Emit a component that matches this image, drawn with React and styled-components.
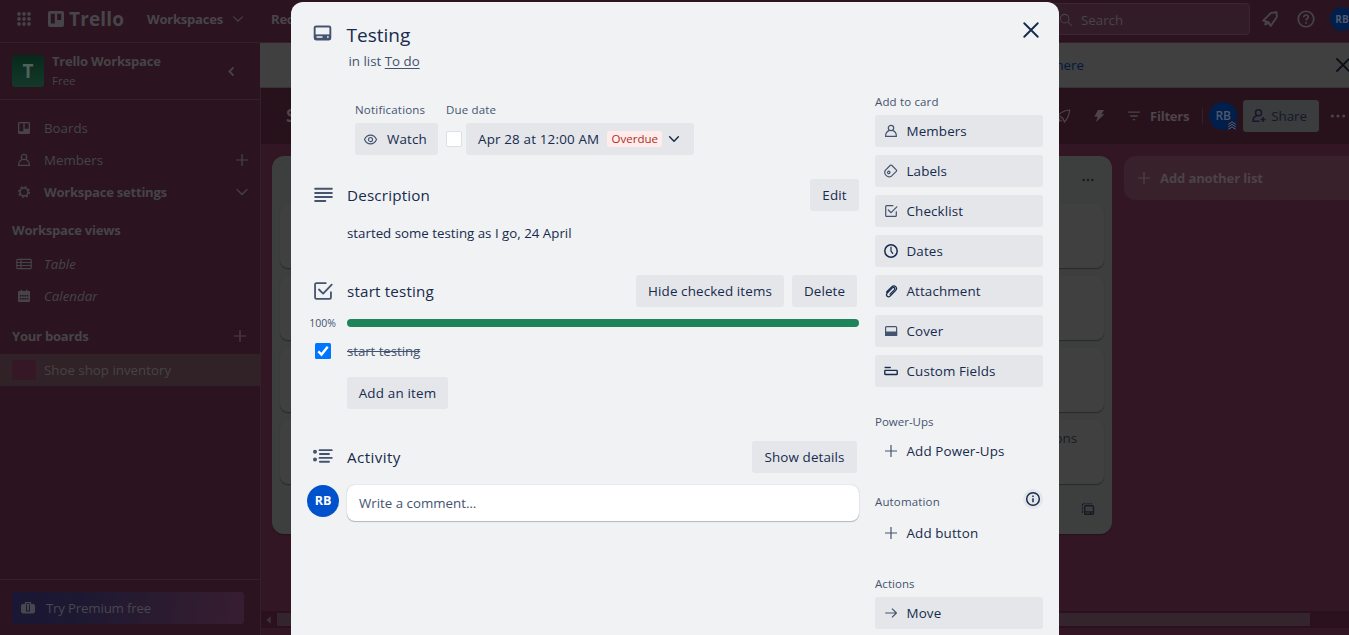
import React from "react";
import styled, { createGlobalStyle } from "styled-components";

const Global = createGlobalStyle`
  * { box-sizing: border-box; }
  body {
    margin: 0;
    overflow: hidden;
    background: #331624;
    font-family: "Open Sans", "Noto Sans", sans-serif;
    font-size: 13.3px;
    line-height: 20px;
    color: #172b4d;
  }
`;

const Text = styled.span`
  font-size: ${(p) => p.$size || 13.3}px;
  font-weight: ${(p) => p.$weight || 400};
  font-style: ${(p) => (p.$italic ? "italic" : "normal")};
  letter-spacing: ${(p) => p.$track || 0}px;
  color: ${(p) => p.$color || "inherit"};
  white-space: nowrap;
`;

const ButtonText = styled(Text).attrs({ $weight: 500, $size: 13.4 })`
  letter-spacing: ${(p) => p.$track ?? 0.12}px;
`;

const Caption = styled(Text).attrs({ $weight: 500, $size: 11.5 })`
  letter-spacing: ${(p) => p.$track ?? 0.15}px;
`;

const SectionTitle = styled(Text).attrs({ $weight: 500, $size: 15.2 })`
  letter-spacing: ${(p) => p.$track ?? 0.18}px;
`;

const Strong = styled(Text).attrs({ $weight: 700 })`
  font-size: 13.1px;
  letter-spacing: ${(p) => p.$track ?? -0.26}px;
`;

const Svg = styled.svg`
  display: block;
  flex: none;
  fill: none;
  stroke: currentColor;
  stroke-width: ${(p) => p.$stroke || 1.2};
`;

const Icon = ({ size = 16, stroke, children, ...rest }) => (
  <Svg width={size} height={size} viewBox="0 0 16 16" $stroke={stroke} {...rest}>
    {children}
  </Svg>
);

const MemberIcon = (p) => (
  <Icon {...p}>
    <circle cx="8" cy="5" r="2.700" />
    <path d="M6.200 7.600C3.600 8.300 2.600 10.400 2.600 13.400h10.800c0-3-1-5.100-3.600-5.800" strokeLinejoin="round" />
  </Icon>
);
const LabelIcon = (p) => (
  <Icon {...p}>
    <path d="M2.300 7.400 7.300 2.300q.7-.6 1.400 0l4.600 4.600q.7.700 0 1.400l-4.600 4.600c-3.800 2.900-8.400-1.700-6.400-5.500z" />
    <circle cx="5.800" cy="9.400" r="1.200" />
  </Icon>
);
const CheckIcon = (p) => (
  <Icon {...p}>
    <path d="M10.300 2.700H3.600q-.9 0-.9.900v8.800q0 .9.900.9h8.800q.9 0 .9-.9V8.300" />
    <path d="m5.300 7 2.800 2.700 5.700-5.900" strokeLinecap="round" strokeLinejoin="round" />
  </Icon>
);
const ClockIcon = (p) => (
  <Icon {...p}>
    <circle cx="8" cy="8" r="6.200" strokeWidth="1.500" />
    <path d="M8 4v4l1.700 2.400" strokeLinecap="round" />
  </Icon>
);
const ClipIcon = (p) => (
  <Icon {...p}>
    <path d="m7 11.200 4.300-4.400c1.300-1.500-.5-3.200-1.900-1.900l-5.200 5.300c-2 2.500.8 4.800 3 2.800L12.500 7.700c2.800-3.100-.9-6.600-3.900-3.800L3.600 9" strokeLinecap="round" />
  </Icon>
);
const CoverIcon = (p) => (
  <Icon {...p}>
    <rect x="2.600" y="3.600" width="11" height="8.800" rx="1" />
    <path d="M2.600 9h11v3.400h-11z" fill="currentColor" />
  </Icon>
);
const FieldsIcon = (p) => (
  <Icon {...p}>
    <path d="M1.600 4.500h6.200" strokeWidth="1.400" />
    <rect x="1.800" y="7.400" width="12.400" height="4.100" rx=".6" strokeWidth="1.400" />
  </Icon>
);
const PlusIcon = (p) => (
  <Icon {...p}>
    <path d="M8 2v12M2 8h12" />
  </Icon>
);
const ArrowIcon = (p) => (
  <Icon {...p}>
    <path d="M2.200 8h11M9 3.600 13.400 8 9 12.400" strokeLinejoin="round" />
  </Icon>
);
const ChevronIcon = (p) => (
  <Icon {...p}>
    <path d="m3 5.500 5 5 5-5" strokeLinecap="round" strokeLinejoin="round" />
  </Icon>
);
const EyeIcon = (p) => (
  <Icon {...p}>
    <path d="M1.600 8c2.600-6.200 10.200-6.200 12.800 0-2.600 6.200-10.200 6.200-12.800 0z" />
    <circle cx="8" cy="8" r="2.200" />
  </Icon>
);
const CloseIcon = (p) => (
  <Icon {...p}>
    <path d="m2 2 12 12M14 2 2 14" strokeLinecap="round" />
  </Icon>
);
const InfoIcon = (p) => (
  <Icon {...p}>
    <circle cx="8" cy="8" r="6.300" />
    <path d="M8 7.300v4M8 4.400v1.600" />
  </Icon>
);
const CardIcon = (p) => (
  <Icon {...p}>
    <rect x="1.400" y="2.900" width="13.200" height="11" rx="1.200" />
    <path d="M1.400 9.600h13.200v4.200H1.400z" fill="currentColor" stroke="none" />
    <path d="M3 11.800h5M11.800 11.800h1.400" stroke="#f1f2f4" strokeWidth="1.200" />
  </Icon>
);
const BoardIcon = (p) => (
  <Icon {...p}>
    <path
      d="M2 0h12q2 0 2 2v12q0 2-2 2H2q-2 0-2-2V2q0-2 2-2zM2.800 2.800v9.700h4V2.800zM9.200 2.800v6.200h4V2.800z"
      fill="currentColor"
      fillRule="evenodd"
      stroke="none"
    />
  </Icon>
);
const BoardOutlineIcon = (p) => (
  <Icon {...p}>
    <path
      d="M3.200 2h9.600q1.200 0 1.200 1.200v9.600q0 1.200-1.200 1.200H3.200Q2 14 2 12.800V3.200Q2 2 3.200 2zM3.300 3.300v7.900h4V3.300zM8.700 3.300v5.400h4V3.300z"
      fill="currentColor"
      fillRule="evenodd"
      stroke="none"
    />
  </Icon>
);
const GearIcon = (p) => (
  <Icon {...p}>
    <circle cx="8" cy="8" r="4" strokeWidth="1.600" />
    <circle cx="8" cy="8" r="5.300" strokeWidth="1.500" strokeDasharray="1.900 2.262" />
  </Icon>
);
const TableIcon = (p) => (
  <Icon {...p}>
    <rect x=".8" y="3.300" width="14.400" height="9.400" rx="1" />
    <path d="M.8 6.500h14.400M.8 9.500h14.400M5 3.300v9.400" />
  </Icon>
);
const CalendarIcon = (p) => (
  <Icon {...p}>
    <path
      d="M3 3h1.500V1.800H6V3h4V1.800h1.500V3H13q1 0 1 1v9q0 1-1 1H3q-1 0-1-1V4q0-1 1-1z"
      fill="currentColor"
      stroke="none"
    />
    <path d="M3.800 7.800h8.600M3.800 10.800h8.600" stroke="#2b141f" strokeWidth="1.600" strokeDasharray="1.600 .7" />
  </Icon>
);
const CaseIcon = (p) => (
  <Icon {...p}>
    <rect x="1" y="4" width="14" height="9.400" rx="1.800" fill="currentColor" stroke="none" />
    <path d="M5.500 4V2.600h5V4" strokeWidth="1.300" />
    <path d="M6.500 4.500v6.600h3V4.500" stroke="#1c1833" strokeWidth="1" />
  </Icon>
);
const BellIcon = (p) => (
  <Icon {...p}>
    <path d="M1.900 9.400 9 2.500l4.800-.5.300 4.200-5.500 8-1.800-3.400zM4.500 10.300l-.8 2.600 3-.9" strokeLinejoin="round" />
  </Icon>
);
const HelpIcon = (p) => (
  <Icon {...p}>
    <circle cx="8" cy="8" r="6.900" />
    <path d="M6 6.400c0-2.700 4-2.500 4-.2 0 1.500-2 1.600-2 3.200M8 10.700v1.500" />
  </Icon>
);
const SearchIcon = (p) => (
  <Icon {...p}>
    <circle cx="6.500" cy="6.500" r="4.900" />
    <path d="m10 10 4.500 4.500" />
  </Icon>
);
const RocketIcon = (p) => (
  <Icon {...p}>
    <path d="M2 7.600q4-5 11.700-5.600-.5 7-5.300 12L7 10.500 5.300 9zM4 10l-1.600 3.600L6 12" strokeLinejoin="round" />
  </Icon>
);
const BoltIcon = (p) => (
  <Icon {...p}>
    <path d="M7 2h6L10.500 6.200h2.900L4.900 14.300l1.800-5.500H3.300z" fill="currentColor" stroke="none" />
  </Icon>
);
const FilterIcon = (p) => (
  <Icon {...p}>
    <path d="M2.200 4.200h11.600M4.200 8h7.600M6.800 11.700h2.400" strokeWidth="1.300" />
  </Icon>
);
const DotsIcon = (p) => (
  <Icon {...p}>
    <circle cx="2.300" cy="8" r="1.600" fill="currentColor" stroke="none" />
    <circle cx="8" cy="8" r="1.600" fill="currentColor" stroke="none" />
    <circle cx="13.700" cy="8" r="1.600" fill="currentColor" stroke="none" />
  </Icon>
);
const AppsIcon = (p) => (
  <Icon {...p}>
    {[2.300, 8, 13.700].map((x) =>
      [2.300, 8, 13.700].map((y) => (
        <rect key={`${x}-${y}`} x={x - 1.900} y={y - 1.900} width="3.800" height="3.800" rx="1.300" fill="currentColor" stroke="none" />
      ))
    )}
  </Icon>
);
const LinesIcon = (p) => (
  <Icon {...p}>
    <path d="M1 2.400h14M1 5.800h14M1 9.200h14M1 12.600h8.500" strokeLinecap="round" />
  </Icon>
);
const ActivityIcon = (p) => (
  <Icon {...p}>
    <path d="M5.200 2.500h9.800M5.500 5.600h7.300M5.200 8.700h9.800M5.500 11.800h7.300" strokeLinecap="round" />
    <circle cx="1.600" cy="3.700" r="1.600" fill="currentColor" stroke="none" />
    <circle cx="1.600" cy="9.900" r="1.600" fill="currentColor" stroke="none" />
  </Icon>
);
const TemplateIcon = (p) => (
  <Icon {...p}>
    <rect x="4.700" y="4.700" width="8.800" height="8.600" rx="1" strokeWidth="1.400" />
    <path d="M4.700 10.300h8.800v1.300H4.700zM9.500 11h2v2h-2z" fill="currentColor" stroke="none" />
    <path d="M2.500 12V2.700H12" strokeDasharray="2.400 1" strokeWidth="1.100" />
  </Icon>
);

/* ---------- Page behind the dialog ---------- */

const Page = styled.div`
  position: relative;
  display: flex;
  flex-direction: column;
  width: 1349px;
  height: 635px;
  overflow: hidden;
`;

const TopBar = styled.header`
  display: flex;
  align-items: center;
  height: 43px;
  padding: 0 0 4px 17px;
  background: #2b141f;
  border-bottom: 1px solid #35202a;
  color: #484549;
`;

const Logo = styled.div`
  display: flex;
  align-items: center;
  gap: 5px;
  width: 99px;
  margin-left: 17px;
`;

const NavItem = styled.div`
  display: flex;
  align-items: center;
  gap: 8px;
  width: 124px;
`;

const SearchBox = styled.div`
  display: flex;
  align-items: center;
  gap: 8px;
  width: 210px;
  height: 32px;
  margin-left: auto;
  padding: 1px 0 0 18px;
  border: 1px solid #3b2731;
  border-radius: 4px;
  background: #321c27;
`;

const TopIcons = styled.div`
  display: flex;
  align-items: center;
  gap: 18px;
  width: 99px;
  padding-left: 11px;
  overflow: hidden;
  & > div { margin-left: -3px; }
`;

const Avatar = styled.div`
  position: relative;
  display: flex;
  flex: none;
  align-items: center;
  justify-content: center;
  width: ${(p) => p.$size}px;
  height: ${(p) => p.$size}px;
  border-radius: 50%;
  background: ${(p) => (p.$dim ? "#001f4c" : "#0052cc")};
  color: ${(p) => (p.$dim ? "#4f5a70" : "#fff")};
`;

const AdminBadge = styled.span`
  position: absolute;
  right: 0;
  bottom: 1px;
  width: 10px;
  height: 9px;
  background: #111a38;
  color: #5a6488;
`;

const Body = styled.div`
  display: flex;
  flex: 1;
  min-height: 0;
`;

const Sidebar = styled.nav`
  display: flex;
  flex-direction: column;
  width: 261px;
  background: #2b141f;
  border-right: 1px solid #33202a;
  color: #454447;
`;

const WorkspaceHead = styled.div`
  display: flex;
  align-items: center;
  height: 57px;
  padding: 0 22px 0 12px;
  border-bottom: 1px solid #35202a;
`;

const WorkspaceTile = styled.div`
  display: flex;
  align-items: center;
  justify-content: center;
  width: 32px;
  height: 32px;
  margin-right: 8px;
  border-radius: 3px;
  background: linear-gradient(#06291c, #14382a);
  color: #50605a;
`;

const WorkspaceName = styled.div`
  display: flex;
  flex: 1;
  flex-direction: column;
`;

const SideRow = styled.div`
  display: flex;
  align-items: center;
  height: 32px;
  padding: 0 ${(p) => p.$right || 10}px 0 ${(p) => p.$left || 16}px;
  gap: ${(p) => p.$gap ?? 12}px;
  margin-top: ${(p) => p.$top || 0}px;
  background: ${(p) => (p.$active ? "#312228" : "transparent")};
  & > svg:last-child:not(:first-child) { margin-left: auto; }
`;

const BoardSwatch = styled.span`
  width: 24px;
  height: 20px;
  border-radius: 3px;
  background: #351725;
`;

const SideFoot = styled.div`
  height: 56px;
  margin-top: auto;
  padding: 12px;
  border-top: 1px solid #35202a;
`;

const PremiumButton = styled.div`
  display: flex;
  align-items: center;
  gap: 10px;
  width: 232px;
  height: 32px;
  padding-left: 8px;
  border-radius: 3px;
  background: linear-gradient(100deg, #1a1734 0%, #1d1832 28%, #2a1b30 62%, #381d31 100%);
  color: #48474f;
`;

const Board = styled.main`
  display: flex;
  flex: 1;
  flex-direction: column;
  min-width: 0;
  background: #331624;
`;

const Banner = styled.div`
  display: flex;
  align-items: center;
  justify-content: flex-end;
  flex: none;
  gap: 251px;
  height: 45px;
  margin-left: -1px;
  background: #404040;
  border-bottom: 1px solid #373237;
  color: #0b1018;
  overflow: hidden;
  & > svg { margin-right: -2px; }
`;

const BoardBar = styled.div`
  display: flex;
  align-items: center;
  flex: none;
  height: 56px;
  padding-left: 25px;
  background: #27111b;
  color: #4d444a;
`;

const BoardTools = styled.div`
  display: flex;
  align-items: center;
  margin-left: auto;
  width: 293px;
`;

const ToolGap = styled.i`
  width: ${(p) => p.$w}px;
`;

const ToolDivider = styled.i`
  width: 1px;
  height: 16px;
  margin: 0 6px 0 13px;
  background: #352029;
`;

const ShareButton = styled.div`
  display: flex;
  align-items: center;
  gap: 4px;
  width: 76px;
  height: 32px;
  margin: 0 11px 0 6px;
  padding-left: 8px;
  border-radius: 3px;
  background: #3b3c3e;
  color: #12192a;
`;

const Lists = styled.div`
  display: flex;
  flex: 1;
  gap: 12px;
  padding: 12px 0 0 11px;
  align-items: flex-start;
  overflow: hidden;
`;

const List = styled.section`
  display: flex;
  flex: none;
  flex-direction: column;
  gap: 8px;
  width: 272px;
  height: 378px;
  padding: 0 8px;
  border-radius: 12px;
  background: #3c3f3d;
  box-shadow: 0 1px 1px #20141a;
  color: #171b24;
`;

const ListHead = styled.div`
  display: flex;
  align-items: center;
  justify-content: flex-end;
  height: 40px;
  padding: 8px 10px 0 0;
`;

const BoardCard = styled.article`
  height: 64px;
  padding: 8px 27px;
  border-radius: 8px;
  background: #404040;
  box-shadow: 0 1px 1px #272a29;
  text-align: right;
`;

const ListFoot = styled.div`
  display: flex;
  align-items: center;
  justify-content: space-between;
  padding: 9px 8px 0 10px;
`;

const AddList = styled.div`
  display: flex;
  flex: none;
  align-items: center;
  gap: 8px;
  width: 272px;
  height: 44px;
  padding-left: 12px;
  border-radius: 12px;
  background: #39212c;
  color: #4c4346;
`;

const Scroller = styled.div`
  display: flex;
  align-items: center;
  flex: none;
  height: 17px;
  margin-bottom: 7px;
  background: #2b111e;
  color: #40303a;
`;

const Thumb = styled.i`
  width: 1033px;
  height: 13px;
  margin-left: 4px;
  background: #33252b;
`;

/* ---------- Card dialog ---------- */

const Dialog = styled.section`
  position: absolute;
  left: 291px;
  top: 2px;
  width: 768px;
  height: 660px;
  border-radius: 12px;
  background: #f1f2f4;
`;

const DialogHead = styled.header`
  display: flex;
  height: 69px;
  padding: 21px 19px 0 22px;
  color: #44546f;
  & > svg:last-child { margin: -2px 0 0 auto; color: #172b4d; }
`;

const Titles = styled.div`
  display: flex;
  flex-direction: column;
  margin-left: 14.500px;
  line-height: 24px;
`;

const InList = styled.div`
  margin: 4px 0 0 2px;
  line-height: 20px;
  u { text-underline-offset: 2px; }
`;

const DialogBody = styled.div`
  display: flex;
`;

const Main = styled.div`
  display: flex;
  flex-direction: column;
  width: 568px;
  padding-left: 16px;
`;

const Meta = styled.div`
  display: flex;
  gap: 8px;
  margin: 31px 0 0 48px;
`;

const MetaGroup = styled.div`
  display: flex;
  flex-direction: column;
  gap: 5px;
  line-height: 16px;
  color: #44546f;
`;

const MetaRow = styled.div`
  display: flex;
  align-items: center;
  gap: 4px;
`;

const Button = styled.div`
  display: flex;
  flex: none;
  align-items: center;
  justify-content: ${(p) => (p.$start ? "flex-start" : "center")};
  gap: ${(p) => p.$gap || 8}px;
  width: ${(p) => p.$w}px;
  height: 32px;
  padding-left: ${(p) => (p.$start ? p.$pad || 8 : 0)}px;
  border-radius: 3px;
  background: ${(p) => (p.$ghost ? "transparent" : "#e4e6ea")};
  color: #172b4d;
  & > svg { color: ${(p) => (p.$dark ? "#172b4d" : "#44546f")}; }
`;

const EmptyBox = styled.span`
  width: 16px;
  height: 16px;
  border: 1px solid #dcdfe4;
  border-radius: 2px;
  background: #fff;
`;

const Overdue = styled.span`
  display: flex;
  align-items: center;
  justify-content: center;
  width: 55px;
  height: 16px;
  margin-right: -3px;
  border-radius: 2px;
  background: #ffeceb;
`;

const SectionHead = styled.div`
  display: flex;
  align-items: center;
  height: 32px;
  margin-top: ${(p) => p.$top}px;
  padding-right: ${(p) => p.$right || 0}px;
  gap: 8px;
  width: 552px;
`;

const Gutter = styled.div`
  display: flex;
  align-items: center;
  justify-content: center;
  flex: none;
  width: 32px;
  color: #44546f;
  & > span { margin-left: -1px; }
`;

const Grow = styled.div`
  flex: 1;
`;

const Indent = styled.div`
  margin: ${(p) => p.$top}px 0 0 40px;
`;

const ProgressRow = styled.div`
  display: flex;
  align-items: center;
  gap: 8px;
  height: 16px;
  margin-top: 8px;
`;

const Progress = styled.div`
  width: 512px;
  height: 8px;
  border-radius: 4px;
  background: #1f845a;
`;

const ItemRow = styled.div`
  display: flex;
  align-items: center;
  gap: 8px;
  height: 20px;
  margin-top: 10px;
  color: #44546f;
  s { text-decoration-thickness: 1px; }
`;

const Checked = styled.div`
  display: flex;
  align-items: center;
  justify-content: center;
  width: 16px;
  height: 16px;
  border-radius: 1.500px;
  background: #0075ff;
  color: #fff;
`;

const CommentRow = styled.div`
  display: flex;
  gap: 8px;
  margin-top: 12px;
`;

const CommentBox = styled.div`
  display: flex;
  align-items: center;
  width: 512px;
  height: 36px;
  padding-left: 12px;
  border-radius: 8px;
  background: #fff;
  box-shadow: 0 1px 1px #091e4240, 0 0 1px #091e424f;
  color: #44546f;
`;

const Aside = styled.aside`
  display: flex;
  flex-direction: column;
  width: 168px;
  margin-left: 16px;
`;

const AsideTitle = styled.div`
  display: flex;
  align-items: center;
  justify-content: space-between;
  height: 16px;
  margin-top: ${(p) => p.$top}px;
  margin-bottom: ${(p) => p.$bottom || 5}px;
  color: #44546f;
`;

const InfoBadge = styled.span`
  display: flex;
  align-items: center;
  justify-content: center;
  width: 20px;
  height: 20px;
  margin-top: -6px;
  border-radius: 50%;
  background: #e4e6ea;
  color: #172b4d;
`;

const Stack = styled.div`
  display: flex;
  flex-direction: column;
  gap: 8px;
`;

const cardActions = [
  { label: "Members", icon: MemberIcon },
  { label: "Labels", icon: LabelIcon },
  { label: "Checklist", icon: CheckIcon },
  { label: "Dates", icon: ClockIcon, dark: true },
  { label: "Attachment", icon: ClipIcon, dark: true },
  { label: "Cover", icon: CoverIcon },
  { label: "Custom Fields", icon: FieldsIcon, dark: true },
];

const SideButton = ({ label, icon: Glyph, dark, ghost }) => (
  <Button $start $w={168} $pad={7.500} $dark={dark} $ghost={ghost}>
    <Glyph size={16} />
    <ButtonText>{label}</ButtonText>
  </Button>
);

const BoardList = ({ lastCard }) => (
  <List>
    <ListHead>
      <DotsIcon size={12} />
    </ListHead>
    <BoardCard />
    <BoardCard />
    <BoardCard />
    <BoardCard>
      <Text>{lastCard}</Text>
    </BoardCard>
    <ListFoot>
      <PlusIcon size={14} />
      <TemplateIcon size={16} />
    </ListFoot>
  </List>
);

const Backdrop = () => (
  <>
    <TopBar>
      <AppsIcon size={14} />
      <Logo>
        <BoardIcon size={16} />
        <Text $size={19} $weight={700} $track={0.15}>Trello</Text>
      </Logo>
      <NavItem>
        <Strong>Workspaces</Strong>
        <ChevronIcon size={14} />
      </NavItem>
      <Strong>Recent</Strong>
      <SearchBox>
        <SearchIcon size={14} />
        <Text>Search</Text>
      </SearchBox>
      <TopIcons>
        <BellIcon size={18} stroke={1.600} />
        <HelpIcon size={18} stroke={1.500} />
        <Avatar $size={24} $dim>
          <Text $size={10} $weight={700}>RB</Text>
        </Avatar>
      </TopIcons>
    </TopBar>
    <Body>
      <Sidebar>
        <WorkspaceHead>
          <WorkspaceTile>
            <Text $size={19} $weight={700}>T</Text>
          </WorkspaceTile>
          <WorkspaceName>
            <Strong>Trello Workspace</Strong>
            <Text $size={11.500}>Free</Text>
          </WorkspaceName>
          <Icon size={13} stroke={2.200}>
            <path d="M10.500 3 5.500 8l5 5" />
          </Icon>
        </WorkspaceHead>
        <SideRow $top={12}>
          <BoardOutlineIcon />
          <Text>Boards</Text>
        </SideRow>
        <SideRow>
          <MemberIcon />
          <Text>Members</Text>
          <PlusIcon />
        </SideRow>
        <SideRow>
          <GearIcon />
          <Strong>Workspace settings</Strong>
          <ChevronIcon />
        </SideRow>
        <SideRow $left={12} $top={6}>
          <Strong>Workspace views</Strong>
        </SideRow>
        <SideRow $top={2}>
          <TableIcon />
          <Text $italic>Table</Text>
        </SideRow>
        <SideRow>
          <CalendarIcon />
          <Text $italic>Calendar</Text>
        </SideRow>
        <SideRow $left={12} $right={12} $top={8}>
          <Strong>Your boards</Strong>
          <Grow />
          <PlusIcon />
        </SideRow>
        <SideRow $left={12} $gap={8} $top={2} $active>
          <BoardSwatch />
          <Text>Shoe shop inventory</Text>
        </SideRow>
        <SideFoot>
          <PremiumButton>
            <CaseIcon />
            <Text $track={-0.2}>Try Premium free</Text>
          </PremiumButton>
        </SideFoot>
      </Sidebar>
      <Board>
        <Banner>
          <Text $color="#03193a">here</Text>
          <CloseIcon size={16} stroke={1.800} />
        </Banner>
        <BoardBar>
          <Text $size={17} $weight={700}>Shoe</Text>
          <BoardTools>
            <RocketIcon size={16} />
            <ToolGap $w={19} />
            <BoltIcon size={16} />
            <ToolGap $w={19} />
            <FilterIcon size={16} />
            <ToolGap $w={8} />
            <Strong>Filters</Strong>
            <ToolDivider />
            <Avatar $size={28} $dim>
              <Text $size={12} $weight={600}>RB</Text>
              <AdminBadge>
                <Icon size={10} stroke={1.500}>
                  <path d="m2 7 6-4 6 4M2 11l6-4 6 4M2 15l6-4 6 4" />
                </Icon>
              </AdminBadge>
            </Avatar>
            <ShareButton>
              <Icon size={16} stroke={1.500}>
                <circle cx="7.500" cy="4.800" r="3" />
                <path d="M6 7.500C3 8.500 2 10.500 2 13.300h6.500M12 9v5M9.500 11.500h5" />
              </Icon>
              <Text $weight={500}>Share</Text>
            </ShareButton>
            <DotsIcon size={16} />
          </BoardTools>
        </BoardBar>
        <Lists>
          <BoardList />
          <BoardList />
          <BoardList lastCard="descriptions" />
          <AddList>
            <PlusIcon />
            <Strong $track={-0.15}>Add another list</Strong>
          </AddList>
        </Lists>
        <Scroller>
          <Icon size={12}>
            <path d="M13 3v10L7 8z" fill="currentColor" stroke="none" />
          </Icon>
          <Thumb />
        </Scroller>
      </Board>
    </Body>
  </>
);

const CardDialog = () => (
  <Dialog>
    <DialogHead>
      <CardIcon size={19} stroke={1.600} />
      <Titles>
        <Text $size={19} $weight={500} $color="#172b4d">Testing</Text>
        <InList>
          <Text>in list <u>To do</u></Text>
        </InList>
      </Titles>
      <CloseIcon size={18} stroke={1.700} />
    </DialogHead>
    <DialogBody>
      <Main>
        <Meta>
          <MetaGroup>
            <Caption $track={0.2}>Notifications</Caption>
            <Button $start $w={83} $gap={9}>
              <EyeIcon size={15} />
              <ButtonText>Watch</ButtonText>
            </Button>
          </MetaGroup>
          <MetaGroup>
            <Caption>Due date</Caption>
            <MetaRow>
              <EmptyBox />
              <Button $start $pad={12} $w={228} $dark>
                <ButtonText $track={0.17}>Apr 28 at 12:00 AM</ButtonText>
                <Overdue>
                  <Text $size={11.500} $weight={500} $color="#ae2e24">Overdue</Text>
                </Overdue>
                <ChevronIcon size={14} stroke={1.700} />
              </Button>
            </MetaRow>
          </MetaGroup>
        </Meta>

        <SectionHead $top={24}>
          <Gutter><LinesIcon size={19} stroke={1.700} /></Gutter>
          <SectionTitle>Description</SectionTitle>
          <Grow />
          <Button $w={49}><ButtonText>Edit</ButtonText></Button>
        </SectionHead>
        <Indent $top={12}>
          <Text>started some testing as I go, 24 April</Text>
        </Indent>

        <SectionHead $top={32} $right={2}>
          <Gutter><CheckIcon size={24} stroke={1.200} /></Gutter>
          <SectionTitle>start testing</SectionTitle>
          <Grow />
          <Button $w={148}><ButtonText>Hide checked items</ButtonText></Button>
          <Button $w={65}><ButtonText>Delete</ButtonText></Button>
        </SectionHead>
        <ProgressRow>
          <Gutter><Text $size={10.500}>100%</Text></Gutter>
          <Progress />
        </ProgressRow>
        <ItemRow>
          <Gutter>
            <Checked>
              <Icon size={16} stroke={2.400}>
                <path d="m3.300 8.400 3.200 3.200 6.200-7.800" />
              </Icon>
            </Checked>
          </Gutter>
          <Text $track={-0.07}><s>start testing</s></Text>
        </ItemRow>
        <Indent $top={16}>
          <Button $w={101}><ButtonText $track={0.2}>Add an item</ButtonText></Button>
        </Indent>

        <SectionHead $top={32} $right={2}>
          <Gutter><ActivityIcon size={20} stroke={1.500} /></Gutter>
          <SectionTitle $track={0.4}>Activity</SectionTitle>
          <Grow />
          <Button $w={105}><ButtonText>Show details</ButtonText></Button>
        </SectionHead>
        <CommentRow>
          <Avatar $size={32}><Text $size={12.500} $weight={700}>RB</Text></Avatar>
          <CommentBox><Text>Write a comment…</Text></CommentBox>
        </CommentRow>
      </Main>

      <Aside>
        <AsideTitle $top={23}><Caption>Add to card</Caption></AsideTitle>
        <Stack>
          {cardActions.map((a) => <SideButton key={a.label} {...a} />)}
        </Stack>
        <AsideTitle $top={27}><Caption $track={0}>Power-Ups</Caption></AsideTitle>
        <SideButton label="Add Power-Ups" icon={PlusIcon} ghost />
        <AsideTitle $top={27} $bottom={7}>
          <Caption>Automation</Caption>
          <InfoBadge><InfoIcon size={16} stroke={1.500} /></InfoBadge>
        </AsideTitle>
        <SideButton label="Add button" icon={PlusIcon} ghost />
        <AsideTitle $top={27}><Caption $track={0.05}>Actions</Caption></AsideTitle>
        <SideButton label="Move" icon={ArrowIcon} />
      </Aside>
    </DialogBody>
  </Dialog>
);

export default function App() {
  return (
    <Page>
      <Global />
      <Backdrop />
      <CardDialog />
    </Page>
  );
}
